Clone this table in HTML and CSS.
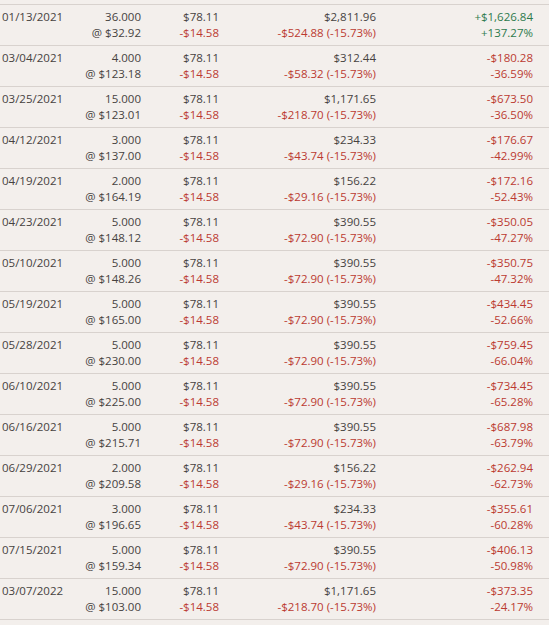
FILE: index.html
```html
<!DOCTYPE html>
<html>
<head>
<meta charset="utf-8">
<link rel="stylesheet" href="styles.css">
</head>
<body>
<div class="lots">
  <div class="row"><div class="date">01/13/2021</div><div class="num"><div>36.000</div><div>@ $32.92</div></div><div class="num"><div>$78.11</div><div class="neg">-$14.58</div></div><div class="num"><div>$2,811.96</div><div class="neg">-$524.88 (-15.73%)</div></div><div class="num"><div class="pos">+$1,626.84</div><div class="pos">+137.27%</div></div></div>
  <div class="row"><div class="date">03/04/2021</div><div class="num"><div>4.000</div><div>@ $123.18</div></div><div class="num"><div>$78.11</div><div class="neg">-$14.58</div></div><div class="num"><div>$312.44</div><div class="neg">-$58.32 (-15.73%)</div></div><div class="num"><div class="neg">-$180.28</div><div class="neg">-36.59%</div></div></div>
  <div class="row"><div class="date">03/25/2021</div><div class="num"><div>15.000</div><div>@ $123.01</div></div><div class="num"><div>$78.11</div><div class="neg">-$14.58</div></div><div class="num"><div>$1,171.65</div><div class="neg">-$218.70 (-15.73%)</div></div><div class="num"><div class="neg">-$673.50</div><div class="neg">-36.50%</div></div></div>
  <div class="row"><div class="date">04/12/2021</div><div class="num"><div>3.000</div><div>@ $137.00</div></div><div class="num"><div>$78.11</div><div class="neg">-$14.58</div></div><div class="num"><div>$234.33</div><div class="neg">-$43.74 (-15.73%)</div></div><div class="num"><div class="neg">-$176.67</div><div class="neg">-42.99%</div></div></div>
  <div class="row"><div class="date">04/19/2021</div><div class="num"><div>2.000</div><div>@ $164.19</div></div><div class="num"><div>$78.11</div><div class="neg">-$14.58</div></div><div class="num"><div>$156.22</div><div class="neg">-$29.16 (-15.73%)</div></div><div class="num"><div class="neg">-$172.16</div><div class="neg">-52.43%</div></div></div>
  <div class="row"><div class="date">04/23/2021</div><div class="num"><div>5.000</div><div>@ $148.12</div></div><div class="num"><div>$78.11</div><div class="neg">-$14.58</div></div><div class="num"><div>$390.55</div><div class="neg">-$72.90 (-15.73%)</div></div><div class="num"><div class="neg">-$350.05</div><div class="neg">-47.27%</div></div></div>
  <div class="row"><div class="date">05/10/2021</div><div class="num"><div>5.000</div><div>@ $148.26</div></div><div class="num"><div>$78.11</div><div class="neg">-$14.58</div></div><div class="num"><div>$390.55</div><div class="neg">-$72.90 (-15.73%)</div></div><div class="num"><div class="neg">-$350.75</div><div class="neg">-47.32%</div></div></div>
  <div class="row"><div class="date">05/19/2021</div><div class="num"><div>5.000</div><div>@ $165.00</div></div><div class="num"><div>$78.11</div><div class="neg">-$14.58</div></div><div class="num"><div>$390.55</div><div class="neg">-$72.90 (-15.73%)</div></div><div class="num"><div class="neg">-$434.45</div><div class="neg">-52.66%</div></div></div>
  <div class="row"><div class="date">05/28/2021</div><div class="num"><div>5.000</div><div>@ $230.00</div></div><div class="num"><div>$78.11</div><div class="neg">-$14.58</div></div><div class="num"><div>$390.55</div><div class="neg">-$72.90 (-15.73%)</div></div><div class="num"><div class="neg">-$759.45</div><div class="neg">-66.04%</div></div></div>
  <div class="row"><div class="date">06/10/2021</div><div class="num"><div>5.000</div><div>@ $225.00</div></div><div class="num"><div>$78.11</div><div class="neg">-$14.58</div></div><div class="num"><div>$390.55</div><div class="neg">-$72.90 (-15.73%)</div></div><div class="num"><div class="neg">-$734.45</div><div class="neg">-65.28%</div></div></div>
  <div class="row"><div class="date">06/16/2021</div><div class="num"><div>5.000</div><div>@ $215.71</div></div><div class="num"><div>$78.11</div><div class="neg">-$14.58</div></div><div class="num"><div>$390.55</div><div class="neg">-$72.90 (-15.73%)</div></div><div class="num"><div class="neg">-$687.98</div><div class="neg">-63.79%</div></div></div>
  <div class="row"><div class="date">06/29/2021</div><div class="num"><div>2.000</div><div>@ $209.58</div></div><div class="num"><div>$78.11</div><div class="neg">-$14.58</div></div><div class="num"><div>$156.22</div><div class="neg">-$29.16 (-15.73%)</div></div><div class="num"><div class="neg">-$262.94</div><div class="neg">-62.73%</div></div></div>
  <div class="row"><div class="date">07/06/2021</div><div class="num"><div>3.000</div><div>@ $196.65</div></div><div class="num"><div>$78.11</div><div class="neg">-$14.58</div></div><div class="num"><div>$234.33</div><div class="neg">-$43.74 (-15.73%)</div></div><div class="num"><div class="neg">-$355.61</div><div class="neg">-60.28%</div></div></div>
  <div class="row"><div class="date">07/15/2021</div><div class="num"><div>5.000</div><div>@ $159.34</div></div><div class="num"><div>$78.11</div><div class="neg">-$14.58</div></div><div class="num"><div>$390.55</div><div class="neg">-$72.90 (-15.73%)</div></div><div class="num"><div class="neg">-$406.13</div><div class="neg">-50.98%</div></div></div>
  <div class="row"><div class="date">03/07/2022</div><div class="num"><div>15.000</div><div>@ $103.00</div></div><div class="num"><div>$78.11</div><div class="neg">-$14.58</div></div><div class="num"><div>$1,171.65</div><div class="neg">-$218.70 (-15.73%)</div></div><div class="num"><div class="neg">-$373.35</div><div class="neg">-24.17%</div></div></div>
</div>
</body>
</html>
```
FILE: styles.css
```css
html, body {
  margin: 0;
  background: #f3efec;
}
body {
  font-family: "Open Sans", sans-serif;
  font-size: 11.5px;
  color: #46423f;
  padding-top: 4px;
}
.lots {
  border-top: 1px solid #d8d2ce;
}
.row {
  display: grid;
  grid-template-columns: 68px 71px 78px 157px 157px;
  padding: 4px 16px 4px 2px;
  border-bottom: 1px solid #d8d2ce;
  line-height: 16px;
}
.num {
  text-align: right;
}
.neg {
  color: #bb3a31;
}
.pos {
  color: #2d7a4c;
}
```
